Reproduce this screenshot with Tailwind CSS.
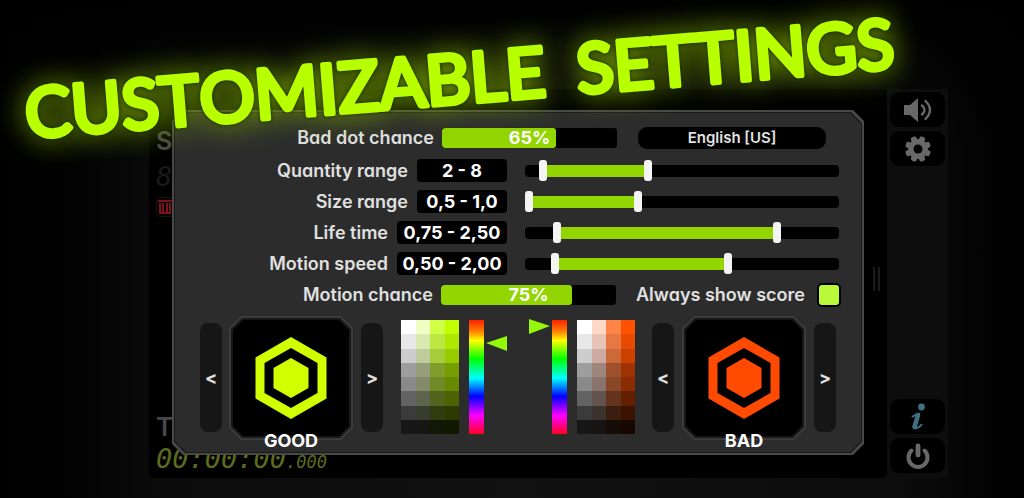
<!DOCTYPE html>
<html lang="en">
<head>
<meta charset="utf-8">
<meta name="viewport" content="width=device-width, initial-scale=1">
<title>Customizable settings</title>
<script src="https://cdn.jsdelivr.net/npm/@tailwindcss/browser@4"></script>
</head>
<body class="relative min-h-screen overflow-x-hidden bg-black bg-[linear-gradient(90deg,#000_0%,#030303_8%,#0b0b0b_16%,#111_50%,#0c0c0c_88%,#030303_96%,#000_100%)] pt-[89px] pb-5 pl-[149px] pr-[76px] font-['Inter','Noto_Sans',sans-serif] text-[#e0e0e0] [font-feature-settings:'cv11']">

<div class="absolute inset-x-0 top-0 h-40 bg-linear-to-b from-black to-transparent"></div>

<main class="relative flex min-h-[389px]">
  <!-- Game screen behind the dialog -->
  <section class="flex flex-1 flex-col items-start rounded-sm bg-black pt-9 pl-[7px] pb-1" aria-label="Game">
    <span class="text-[25px] leading-8 font-semibold text-[#484848]">S</span>
    <span class="mt-1 font-['DejaVu_Sans_Mono',monospace] text-[27px] leading-8 italic text-[#1a1a1a]">8</span>
    <span class="mt-1 flex h-5 w-5 items-center rounded border border-[#151515]">
      <svg viewBox="0 0 16 16" class="h-4 w-4" fill="none" stroke="#7d1018" stroke-width="2"><path d="M1 2h14M3 4v10h10V4M6 4v9M10 4v9"/></svg>
    </span>
    <span class="mt-auto text-[26px] leading-7 font-semibold text-[#484848]">T</span>
    <span class="mt-[6px] font-['DejaVu_Sans_Mono',monospace] text-[27px] leading-6 italic text-[#5d6b1c]">00:00:00<span class="text-[17px]">.000</span></span>
  </section>
  <div class="absolute top-[178px] right-[68px] flex gap-[3px]"><i class="h-6 w-[2px] bg-[#1c1c1c]"></i><i class="h-6 w-[2px] bg-[#1c1c1c]"></i></div>

  <nav class="flex w-[61px] flex-col gap-1 bg-[#0d0d0d] px-[3px] pt-[3px] pb-[5px]" aria-label="Game menu">
    <button class="grid h-[35px] place-items-center rounded-[9px] bg-black" aria-label="Sound">
      <svg viewBox="0 0 30 26" class="h-[26px] w-[30px]"><path d="M1 8h6l8-7v24l-8-7H1z" fill="#686868"/><path d="M19 8.500q5 4.500 0 9M22.500 4q9 9 0 18" fill="none" stroke="#686868" stroke-width="2.400" stroke-linecap="round"/></svg>
    </button>
    <button class="grid h-[35px] place-items-center rounded-[9px] bg-black" aria-label="Settings">
      <svg viewBox="0 0 28 28" class="h-7 w-7"><g fill="#686868"><rect x="11" y="1" width="6" height="26" rx="2" transform="rotate(22.500 14 14)"/><rect x="11" y="1" width="6" height="26" rx="2" transform="rotate(67.500 14 14)"/><rect x="11" y="1" width="6" height="26" rx="2" transform="rotate(112.500 14 14)"/><rect x="11" y="1" width="6" height="26" rx="2" transform="rotate(157.500 14 14)"/><circle cx="14" cy="14" r="10"/></g><circle cx="14" cy="14" r="4.500" fill="#000"/></svg>
    </button>
    <button class="mt-auto grid h-[35px] place-items-center rounded-[9px] bg-black" aria-label="Information">
      <svg viewBox="0 0 16 28" class="h-7 w-4" fill="none"><circle cx="11.500" cy="4" r="3.400" fill="#3f6f82"/><path d="M2 14q4-3 7-3L5.500 22q-1 4 1.500 3 3-1 5-4" stroke="#3f6f82" stroke-width="2"/><path d="M8 12 4.500 24" stroke="#3f6f82" stroke-width="4.500" stroke-linecap="round"/></svg>
    </button>
    <button class="grid h-[35px] place-items-center rounded-[9px] bg-black" aria-label="Quit">
      <svg viewBox="0 0 26 26" class="h-[26px] w-[26px]" fill="none" stroke="#686868" stroke-linecap="round"><path d="M6.500 7.500a9.500 9.500 0 1 0 13 0" stroke-width="4"/><path d="M13 3v9" stroke-width="4.800"/></svg>
    </button>
  </nav>
</main>

<!-- Settings dialog: three nested layers make the bevelled frame -->
<div role="dialog" aria-label="Settings" class="absolute top-[110px] right-[160px] left-[172px] bg-[#484848] p-[2px] [clip-path:polygon(11px_0,calc(100%-11px)_0,100%_11px,100%_calc(100%-11px),calc(100%-11px)_100%,11px_100%,0_calc(100%-11px),0_11px)]">
<div class="bg-[#191919] p-px [clip-path:polygon(11px_0,calc(100%-11px)_0,100%_11px,100%_calc(100%-11px),calc(100%-11px)_100%,11px_100%,0_calc(100%-11px),0_11px)]">
<form class="bg-[#2c2c2c] pt-[7px] pb-px text-[18px] leading-6 font-semibold [clip-path:polygon(11px_0,calc(100%-11px)_0,100%_11px,100%_calc(100%-11px),calc(100%-11px)_100%,11px_100%,0_calc(100%-11px),0_11px)]">

  <div class="flex h-[35px] items-center pr-[35px]">
    <span class="w-[259px] text-right" id="l1">Bad dot chance</span>
    <div role="progressbar" aria-labelledby="l1" aria-valuenow="65" class="relative ml-2 h-5 w-[175px] overflow-hidden rounded-[3px] bg-black text-center leading-5 font-bold text-white">
      <div class="absolute inset-y-0 left-0 rounded-[3px] bg-[#93d500]" style="width:65%"></div><span class="relative">65%</span>
    </div>
    <select aria-label="Language" class="ml-[21px] h-[22px] flex-1 appearance-none rounded-[9px] bg-black text-center text-[15px] leading-5 font-semibold [text-align-last:center]"><option>English [US]</option></select>
  </div>

  <div class="flex h-[31px] items-center pr-[22px]">
    <div class="flex w-[332px] items-center justify-end gap-[9px]"><span>Quantity range</span><output class="h-[23px] w-[90px] rounded bg-black text-center leading-[23px] font-bold text-white">2 - 8</output></div>
    <div class="relative ml-[18px] h-3 flex-1 rounded bg-black">
      <div class="absolute inset-x-1 inset-y-0"><div class="absolute inset-y-0 bg-[#93d500]" style="left:4.6%;right:61.1%"></div></div>
      <input type="range" aria-label="Quantity minimum" step="0.1" value="4.6" class="pointer-events-none absolute inset-0 h-full w-full appearance-none bg-transparent [&::-webkit-slider-thumb]:pointer-events-auto [&::-webkit-slider-thumb]:h-[21px] [&::-webkit-slider-thumb]:w-2 [&::-webkit-slider-thumb]:appearance-none [&::-webkit-slider-thumb]:rounded-[3px] [&::-webkit-slider-thumb]:bg-[#f4f4f4]">
      <input type="range" aria-label="Quantity maximum" step="0.1" value="38.9" class="pointer-events-none absolute inset-0 h-full w-full appearance-none bg-transparent [&::-webkit-slider-thumb]:pointer-events-auto [&::-webkit-slider-thumb]:h-[21px] [&::-webkit-slider-thumb]:w-2 [&::-webkit-slider-thumb]:appearance-none [&::-webkit-slider-thumb]:rounded-[3px] [&::-webkit-slider-thumb]:bg-[#f4f4f4]">
    </div>
  </div>

  <div class="flex h-[31px] items-center pr-[22px]">
    <div class="flex w-[332px] items-center justify-end gap-[9px]"><span>Size range</span><output class="h-[23px] w-[90px] rounded bg-black text-center leading-[23px] font-bold text-white">0,5 - 1,0</output></div>
    <div class="relative ml-[18px] h-3 flex-1 rounded bg-black">
      <div class="absolute inset-x-1 inset-y-0"><div class="absolute inset-y-0 bg-[#93d500]" style="left:0%;right:64.4%"></div></div>
      <input type="range" aria-label="Size minimum" step="0.1" value="0" class="pointer-events-none absolute inset-0 h-full w-full appearance-none bg-transparent [&::-webkit-slider-thumb]:pointer-events-auto [&::-webkit-slider-thumb]:h-[21px] [&::-webkit-slider-thumb]:w-2 [&::-webkit-slider-thumb]:appearance-none [&::-webkit-slider-thumb]:rounded-[3px] [&::-webkit-slider-thumb]:bg-[#f4f4f4]">
      <input type="range" aria-label="Size maximum" step="0.1" value="35.6" class="pointer-events-none absolute inset-0 h-full w-full appearance-none bg-transparent [&::-webkit-slider-thumb]:pointer-events-auto [&::-webkit-slider-thumb]:h-[21px] [&::-webkit-slider-thumb]:w-2 [&::-webkit-slider-thumb]:appearance-none [&::-webkit-slider-thumb]:rounded-[3px] [&::-webkit-slider-thumb]:bg-[#f4f4f4]">
    </div>
  </div>

  <div class="flex h-[31px] items-center pr-[22px]">
    <div class="flex w-[332px] items-center justify-end gap-[9px]"><span>Life time</span><output class="h-[23px] w-[110px] rounded bg-black text-center leading-[23px] font-bold whitespace-nowrap text-white">0,75 - 2,50</output></div>
    <div class="relative ml-[18px] h-3 flex-1 rounded bg-black">
      <div class="absolute inset-x-1 inset-y-0"><div class="absolute inset-y-0 bg-[#93d500]" style="left:9.2%;right:19%"></div></div>
      <input type="range" aria-label="Life time minimum" step="0.1" value="9.2" class="pointer-events-none absolute inset-0 h-full w-full appearance-none bg-transparent [&::-webkit-slider-thumb]:pointer-events-auto [&::-webkit-slider-thumb]:h-[21px] [&::-webkit-slider-thumb]:w-2 [&::-webkit-slider-thumb]:appearance-none [&::-webkit-slider-thumb]:rounded-[3px] [&::-webkit-slider-thumb]:bg-[#f4f4f4]">
      <input type="range" aria-label="Life time maximum" step="0.1" value="81" class="pointer-events-none absolute inset-0 h-full w-full appearance-none bg-transparent [&::-webkit-slider-thumb]:pointer-events-auto [&::-webkit-slider-thumb]:h-[21px] [&::-webkit-slider-thumb]:w-2 [&::-webkit-slider-thumb]:appearance-none [&::-webkit-slider-thumb]:rounded-[3px] [&::-webkit-slider-thumb]:bg-[#f4f4f4]">
    </div>
  </div>

  <div class="flex h-[31px] items-center pr-[22px]">
    <div class="flex w-[332px] items-center justify-end gap-[9px]"><span>Motion speed</span><output class="h-[23px] w-[110px] rounded bg-black text-center leading-[23px] font-bold whitespace-nowrap text-white">0,50 - 2,00</output></div>
    <div class="relative ml-[18px] h-3 flex-1 rounded bg-black">
      <div class="absolute inset-x-1 inset-y-0"><div class="absolute inset-y-0 bg-[#93d500]" style="left:8.5%;right:35%"></div></div>
      <input type="range" aria-label="Motion speed minimum" step="0.1" value="8.5" class="pointer-events-none absolute inset-0 h-full w-full appearance-none bg-transparent [&::-webkit-slider-thumb]:pointer-events-auto [&::-webkit-slider-thumb]:h-[21px] [&::-webkit-slider-thumb]:w-2 [&::-webkit-slider-thumb]:appearance-none [&::-webkit-slider-thumb]:rounded-[3px] [&::-webkit-slider-thumb]:bg-[#f4f4f4]">
      <input type="range" aria-label="Motion speed maximum" step="0.1" value="65" class="pointer-events-none absolute inset-0 h-full w-full appearance-none bg-transparent [&::-webkit-slider-thumb]:pointer-events-auto [&::-webkit-slider-thumb]:h-[21px] [&::-webkit-slider-thumb]:w-2 [&::-webkit-slider-thumb]:appearance-none [&::-webkit-slider-thumb]:rounded-[3px] [&::-webkit-slider-thumb]:bg-[#f4f4f4]">
    </div>
  </div>

  <div class="flex h-[31px] items-center pr-5">
    <span class="w-[258px] text-right" id="l6">Motion chance</span>
    <div role="progressbar" aria-labelledby="l6" aria-valuenow="75" class="relative ml-2 h-5 w-[175px] overflow-hidden rounded-[3px] bg-black text-center leading-5 font-bold text-white">
      <div class="absolute inset-y-0 left-0 rounded-[3px] bg-[#93d500]" style="width:75%"></div><span class="relative">75%</span>
    </div>
    <label for="score" class="ml-5 flex-1 whitespace-nowrap">Always show score</label>
    <input id="score" type="checkbox" checked class="h-6 w-6 appearance-none rounded-[5px] border-2 border-black bg-black checked:bg-[#b9f83a]">
  </div>

  <div class="mt-[6px] flex justify-between px-[25px]">
    <div class="flex">
      <button type="button" class="mt-[7px] h-[109px] w-[22px] rounded-lg bg-[#161616] font-bold" aria-label="Previous good shape">&lt;</button>
      <figure class="ml-[7px] flex w-[124px] flex-col">
        <div class="bg-[#3b3b3b] p-[2px] [clip-path:polygon(12px_0,calc(100%-12px)_0,100%_12px,100%_calc(100%-12px),calc(100%-12px)_100%,12px_100%,0_calc(100%-12px),0_12px)]"><div class="bg-[#171717] p-[2px] [clip-path:polygon(11px_0,calc(100%-11px)_0,100%_11px,100%_calc(100%-11px),calc(100%-11px)_100%,11px_100%,0_calc(100%-11px),0_11px)]"><div class="grid h-[116px] place-items-center bg-black [clip-path:polygon(10px_0,calc(100%-10px)_0,100%_10px,100%_calc(100%-10px),calc(100%-10px)_100%,10px_100%,0_calc(100%-10px),0_10px)]">
          <svg viewBox="0 0 72 82" class="h-[82px] w-[72px]" fill="#d2ff00"><path fill-rule="evenodd" d="M36 0 71.500 20.500V61.500L36 82 .5 61.500V20.500zM36 11 9.500 26V56L36 71 62.500 56V26z"/><path d="M36 21 53.500 31V51L36 61 18.500 51V31z"/></svg>
        </div></div></div>
        <figcaption class="relative -mt-[9px] text-center leading-5 font-bold text-white">GOOD</figcaption>
      </figure>
      <button type="button" class="mt-[7px] ml-2 h-[109px] w-[22px] rounded-lg bg-[#161616] font-bold" aria-label="Next good shape">&gt;</button>
      <div class="relative mt-1 ml-[18px] h-[114px] w-[58px]">
        <div class="grid h-full grid-cols-4"><i class="bg-white"></i><i class="bg-[#f0ffc4]"></i><i class="bg-[#d0ff48]"></i><i class="bg-[#c0ff00]"></i></div>
        <div class="absolute inset-0 grid grid-rows-8"><i></i><i class="bg-black/9"></i><i class="bg-black/20"></i><i class="bg-black/38"></i><i class="bg-black/46"></i><i class="bg-black/61"></i><i class="bg-black/77"></i><i class="bg-black/91"></i></div>
      </div>
      <div class="mt-1 ml-[10px] h-[114px] w-[15px] bg-[linear-gradient(#ff2000,#ff8000_10%,#ff0_18%,#0f0_34%,#0ff_51%,#00f_67%,#f0f_84%,#ff0020)]"></div>
      <svg viewBox="0 0 21 15" class="mt-5 ml-[2px] h-[15px] w-[21px]" fill="#93f80a"><path d="M0 7 21 0V15z"/></svg>
    </div>

    <div class="flex">
      <svg viewBox="0 0 21 15" class="mt-[3px] mr-[2px] h-[15px] w-[21px]" fill="#93f80a"><path d="M21 7 0 0V15z"/></svg>
      <div class="mt-1 mr-[10px] h-[114px] w-[15px] bg-[linear-gradient(#ff2000,#ff8000_10%,#ff0_18%,#0f0_34%,#0ff_51%,#00f_67%,#f0f_84%,#ff0020)]"></div>
      <div class="relative mt-1 mr-[17px] h-[114px] w-[58px]">
        <div class="grid h-full grid-cols-4"><i class="bg-white"></i><i class="bg-[#ffd8c8]"></i><i class="bg-[#ff8448]"></i><i class="bg-[#ff5200]"></i></div>
        <div class="absolute inset-0 grid grid-rows-8"><i></i><i class="bg-black/9"></i><i class="bg-black/20"></i><i class="bg-black/38"></i><i class="bg-black/46"></i><i class="bg-black/61"></i><i class="bg-black/77"></i><i class="bg-black/91"></i></div>
      </div>
      <button type="button" class="mt-[7px] mr-2 h-[109px] w-[22px] rounded-lg bg-[#161616] font-bold" aria-label="Previous bad shape">&lt;</button>
      <figure class="flex w-[124px] flex-col">
        <div class="bg-[#3b3b3b] p-[2px] [clip-path:polygon(12px_0,calc(100%-12px)_0,100%_12px,100%_calc(100%-12px),calc(100%-12px)_100%,12px_100%,0_calc(100%-12px),0_12px)]"><div class="bg-[#171717] p-[2px] [clip-path:polygon(11px_0,calc(100%-11px)_0,100%_11px,100%_calc(100%-11px),calc(100%-11px)_100%,11px_100%,0_calc(100%-11px),0_11px)]"><div class="grid h-[116px] place-items-center bg-black [clip-path:polygon(10px_0,calc(100%-10px)_0,100%_10px,100%_calc(100%-10px),calc(100%-10px)_100%,10px_100%,0_calc(100%-10px),0_10px)]">
          <svg viewBox="0 0 72 82" class="h-[82px] w-[72px]" fill="#ff4a00"><path fill-rule="evenodd" d="M36 0 71.500 20.500V61.500L36 82 .5 61.500V20.500zM36 11 9.500 26V56L36 71 62.500 56V26z"/><path d="M36 21 53.500 31V51L36 61 18.500 51V31z"/></svg>
        </div></div></div>
        <figcaption class="relative -mt-[9px] text-center leading-5 font-bold text-white">BAD</figcaption>
      </figure>
      <button type="button" class="mt-[7px] ml-2 h-[109px] w-[22px] rounded-lg bg-[#161616] font-bold" aria-label="Next bad shape">&gt;</button>
    </div>
  </div>
</form>
</div>
</div>

<h1 class="pointer-events-none absolute inset-x-0 top-0">
  <svg viewBox="0 0 1024 200" class="w-full overflow-visible drop-shadow-[0_0_14px_#7aa800]">
    <g class="drop-shadow-[0_0_2px_#1c2800]">
      <text x="27" y="138" transform="rotate(-4.600 27 138)" fill="#b8ff00" stroke="#b8ff00" stroke-width="5" stroke-linejoin="round" class="font-['Lato','Noto_Sans',sans-serif] text-[69px] font-normal [font-kerning:none] [font-variant-ligatures:none]">CUSTOMIZABLE <tspan x="580">SETTINGS</tspan></text>
    </g>
  </svg>
</h1>
</body>
</html>
